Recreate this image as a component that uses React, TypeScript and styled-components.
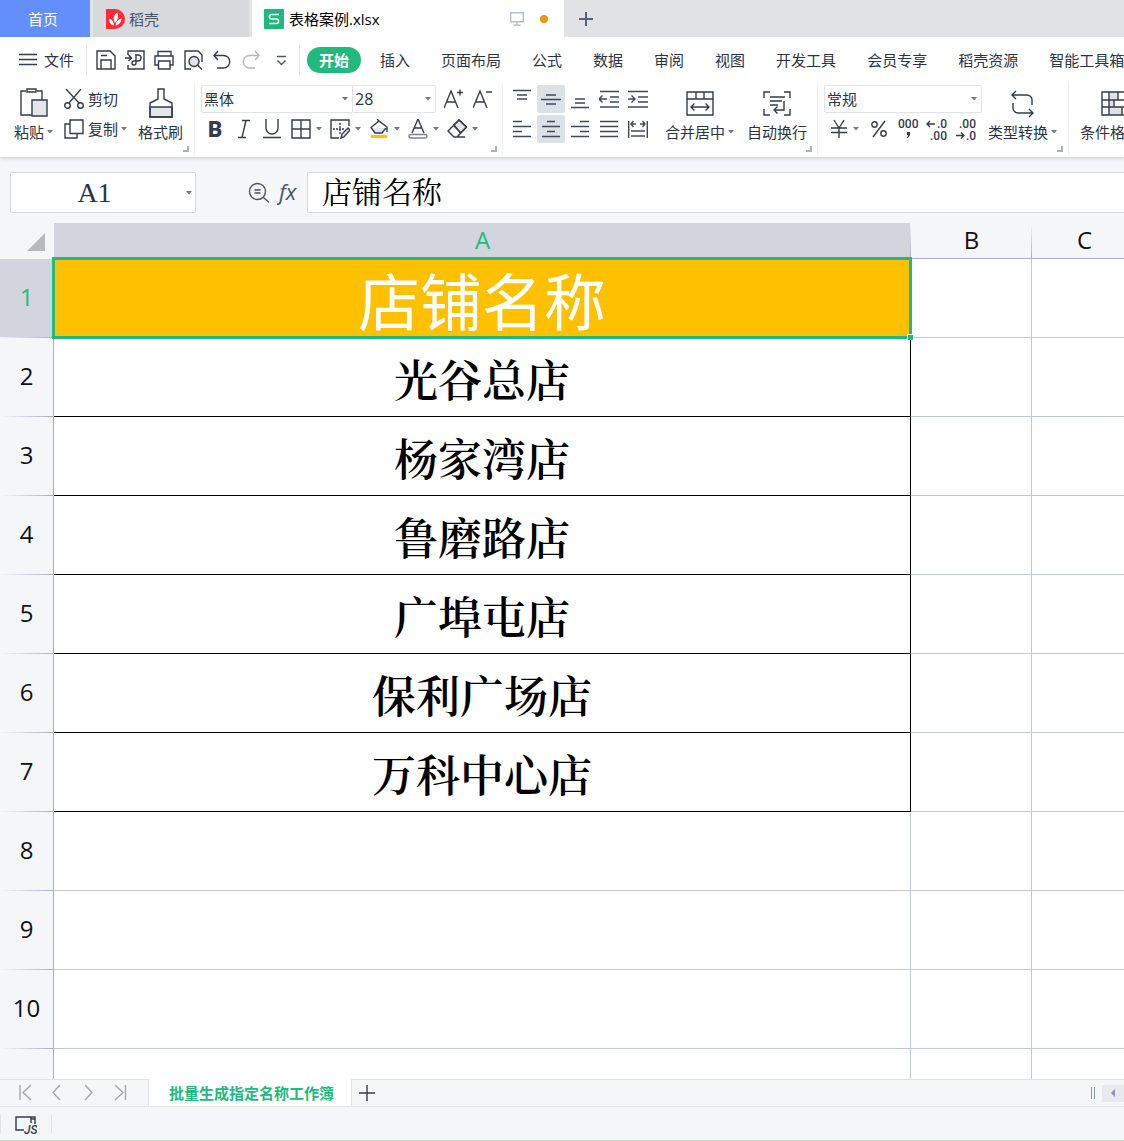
import React from "react";
import styled, { createGlobalStyle } from "styled-components";

const ui = `"Open Sans", "Noto Sans CJK SC", sans-serif`;
const song = `"Noto Serif CJK SC", "Noto Sans CJK SC", serif`;
const ink = "#2b3445";
const green = "#21ba7c";
const line = "#e1e3e8";
const panel = "#f5f6f8";
const gridLine = "#c3c8d9";

const Global = createGlobalStyle`
  *, *::before, *::after { box-sizing: border-box; }
  body { margin: 0; font: 15px/20px ${ui}; color: ${ink}; background: ${panel}; }
  button, input, select { font: inherit; color: inherit; margin: 0; padding: 0; border: 0; background: none; outline: none; border-radius: 0; }
  svg { display: block; flex: none; }
`;

const App_ = styled.div`
  display: flex;
  flex-direction: column;
  height: 100vh;
  overflow: hidden;
  border-bottom: 1px solid #bfe3b4;
`;

/* ---------- window tabs ---------- */
const TabBar = styled.header`
  display: flex;
  flex: none;
  height: 37px;
  background: #e1e2e6;
`;
const HomeTab = styled.button`
  width: 90px;
  padding-right: 4px;
  margin-right: 3px;
  background: #628ffc;
  color: #fff;
`;
const FileTab = styled.button<{ $active?: boolean }>`
  display: flex;
  align-items: center;
  gap: ${(p) => (p.$active ? 5 : 3)}px;
  width: ${(p) => (p.$active ? 312 : 156)}px;
  padding: 1px 16px 0 ${(p) => (p.$active ? 12 : 13)}px;
  margin-right: ${(p) => (p.$active ? 0 : 3)}px;
  background: ${(p) => (p.$active ? "#fff" : "#d8d9dd")};
  color: ${(p) => (p.$active ? "#000" : "#4a5266")};
`;
const TabState = styled.span`
  display: flex;
  align-items: center;
  gap: 16px;
  margin-left: auto;
`;
const Dot = styled.i`
  width: 8px;
  height: 8px;
  border-radius: 50%;
  background: #e99a05;
`;
const NewTab = styled.button`
  display: grid;
  place-items: center;
  width: 43px;
`;

/* ---------- menu ---------- */
const Menu = styled.nav`
  display: flex;
  flex: none;
  align-items: center;
  height: 46px;
  background: #fff;
  white-space: nowrap;
  overflow: hidden;
`;
const FileMenu = styled.button`
  display: flex;
  align-items: center;
  gap: 7px;
  padding: 0 12px 0 19px;
`;
const Quick = styled.div`
  display: flex;
  gap: 7px;
  padding: 0 8px;
  border: solid ${line};
  border-width: 0 1px;
  height: 30px;
  align-items: center;
`;
const MenuTabs = styled.div`
  display: flex;
  gap: 31px;
  padding-left: 7px;
`;
const MenuTab = styled.button<{ $active?: boolean }>`
  flex: none;
  height: 26px;
  ${(p) => p.$active && `width: 54px; margin-right: -12px; border-radius: 13px; background: ${green}; color: #fff; font-weight: 700;`}
`;

/* ---------- ribbon ---------- */
const Ribbon = styled.section`
  position: relative;
  display: flex;
  flex: none;
  height: 74px;
  background: #fff;
  box-shadow: 0 1px 4px rgba(60, 65, 80, 0.25);
  clip-path: inset(0 0 -6px);
  overflow: hidden;
  white-space: nowrap;
  z-index: 1;
`;
const Group = styled.div<{ $w: number; $gap?: number; $pad?: number }>`
  position: relative;
  display: flex;
  flex: none;
  width: ${(p) => p.$w}px;
  gap: ${(p) => p.$gap ?? 0}px;
  padding-left: ${(p) => p.$pad ?? 6}px;
  height: 72px;
  border-right: 1px solid #eceef1;
`;
const Launcher = styled.button`
  position: absolute;
  right: 5px;
  bottom: 3px;
  width: 6px;
  height: 6px;
  border: solid #a9b2c6;
  border-width: 0 2px 2px 0;
`;
const Big = styled.button`
  display: flex;
  flex: none;
  flex-direction: column;
  align-items: center;
  justify-content: space-between;
  height: 59px;
  padding-top: 4px;
`;
const Label = styled.span`
  display: flex;
  align-items: center;
  gap: 3px;
`;
const Stack = styled.div`
  display: flex;
  flex: none;
  flex-direction: column;
  gap: 2px;
  padding-top: 2px;
`;
const Row = styled.div<{ $gap?: number }>`
  display: flex;
  align-items: center;
  height: 28px;
  gap: ${(p) => p.$gap ?? 0}px;
`;
const Small = styled.button`
  display: flex;
  align-items: center;
  gap: 4px;
  height: 28px;
`;
const Tool = styled.button<{ $w?: number; $on?: boolean }>`
  display: flex;
  flex: none;
  align-items: center;
  justify-content: center;
  gap: 5px;
  width: ${(p) => p.$w ?? 28}px;
  height: 28px;
  border-radius: 2px;
  background: ${(p) => (p.$on ? "#dce1e6" : "none")};
`;
const Combo = styled.label<{ $w: number }>`
  display: flex;
  align-items: center;
  width: ${(p) => p.$w}px;
  height: 28px;
  padding: 0 4px 0 2px;
  border: 1px solid ${line};
  border-radius: 2px;
  & + & { margin-left: -1px; font-size: 16px; }
  select { appearance: none; flex: 1; min-width: 0; }
`;

/* ---------- formula bar ---------- */
const FormulaBar = styled.section`
  display: flex;
  flex: none;
  height: 66px;
  padding: 15px 0 10px 10px;
  background: ${panel};
`;
const NameBox = styled.label`
  display: flex;
  align-items: center;
  width: 186px;
  padding-right: 3px;
  border: 1px solid #d5d7dd;
  border-radius: 2px;
  background: #fff;
  input { flex: 1; min-width: 0; padding: 0 8px 0 0; text-align: center; font: 28px/30px "Liberation Serif", serif; }
`;
const FormulaTools = styled.div`
  display: flex;
  align-items: center;
  justify-content: flex-end;
  gap: 7px;
  width: 111px;
  padding-right: 6px;
`;
const FormulaInput = styled.input`
  flex: 1;
  min-width: 0;
  padding: 0 14px 6px;
  border: 1px solid #d5d7dd;
  border-right: 0;
  border-radius: 2px 0 0 2px;
  background: #fff;
  color: #000;
  font: 400 30px/30px ${song};
`;

/* ---------- sheet ---------- */
const SheetArea = styled.main`
  flex: 1;
  min-height: 0;
  overflow: hidden;
  background: #fff;
`;
const Sheet = styled.table`
  width: 1137px;
  table-layout: fixed;
  border-collapse: separate;
  border-spacing: 0;
`;
const Corner = styled.td`
  padding: 0 9px 8px 0;
  vertical-align: bottom;
  background: ${panel};
  svg { margin-left: auto; }
`;
const ColHead = styled.th<{ $on?: boolean }>`
  height: 36px;
  padding: 0 0 2px;
  border-bottom: 1px solid #a9afc3;
  background: linear-gradient(to bottom, ${panel}, #a9b0c6) right / 1px 100% no-repeat, ${(p) => (p.$on ? "#d2d5dd" : panel)};
  color: ${(p) => (p.$on ? green : "#111")};
  font: 24px/32px ${ui};
`;
const RowHead = styled.th<{ $on?: boolean }>`
  height: 79px;
  padding: 0 0 4px;
  border-right: 1px solid #a9b0c6;
  background: linear-gradient(to right, ${panel}, #a9b0c6) bottom / 100% 1px no-repeat, ${(p) => (p.$on ? "#d2d5dd" : panel)};
  color: ${(p) => (p.$on ? green : "#111")};
  font: 24px/32px ${ui};
`;
const Cell = styled.td<{ $kind?: "title" | "data" }>`
  position: ${(p) => (p.$kind === "title" ? "relative" : "static")};
  padding: ${(p) => (p.$kind ? "2px 0 0" : "0")};
  border: solid ${(p) => (p.$kind ? "#000" : gridLine)};
  border-width: 0 1px 1px 0;
  background: ${(p) => (p.$kind === "title" ? "#ffc000" : "#fff")};
  color: ${(p) => (p.$kind === "title" ? "#fff" : "#000")};
  text-align: center;
  font: ${(p) => (p.$kind === "title" ? `400 62px/64px "Noto Sans CJK SC", sans-serif` : `600 44px/64px ${song}`)};
`;
const Selection = styled.div`
  position: absolute;
  z-index: 1;
  inset: -2px;
  border: 3px solid ${green};
  &::after {
    content: "";
    position: absolute;
    right: -4px;
    bottom: -4px;
    width: 6px;
    height: 6px;
    border: solid #fff;
    border-width: 1px 0 0 1px;
    background: ${green};
  }
`;

/* ---------- footer ---------- */
const SheetBar = styled.footer`
  display: flex;
  flex: none;
  height: 28px;
  border: solid ${line};
  border-width: 1px 0;
  background: ${panel};
`;
const SheetNav = styled.div`
  display: flex;
  align-items: center;
  gap: 15px;
  width: 149px;
  padding: 0 0 2px 18px;
  border-right: 1px solid ${line};
`;
const SheetTab = styled.button`
  padding: 0 17px 0 20px;
  margin-top: -1px;
  background: #fff;
  border-right: 1px solid ${line};
  color: ${green};
  font-weight: 700;
`;
const AddSheet = styled.button`
  display: grid;
  place-items: center;
  width: 29px;
`;
const Scroll = styled.div`
  display: flex;
  align-items: center;
  gap: 7px;
  margin-left: auto;
`;
const Splitter = styled.i`
  width: 4px;
  height: 12px;
  border: solid #8c97b0;
  border-width: 0 1px;
`;
const ScrollLeft = styled.button`
  display: grid;
  place-items: center;
  width: 22px;
  height: 17px;
  background: #e8e9ef;
`;
const Status = styled.div`
  display: flex;
  flex: none;
  align-items: center;
  height: 33px;
  background: ${panel};
`;
const StatusItem = styled.button`
  display: grid;
  place-items: center;
  width: 52px;
  height: 18px;
  border: solid ${line};
  border-width: 0 1px;
`;

/* ---------- icons ---------- */
type IconProps = { w?: number; h?: number; color?: string; sw?: number; children: React.ReactNode };
const Icon = ({ w = 22, h = 22, color = "#333c4d", sw = 1.4, children }: IconProps) => (
  <svg width={w} height={h} viewBox={`0 0 ${w} ${h}`} fill="none" stroke={color} strokeWidth={sw} aria-hidden="true">
    {children}
  </svg>
);
const Arrow = () => (
  <svg width="6" height="4" viewBox="0 0 6 4" aria-hidden="true"><path d="M0 0h6L3 3.5z" fill="#6d7891" /></svg>
);
const Glyph = ({ x, y, size, weight, italic, children }: { x: number; y: number; size: number; weight?: number; italic?: boolean; children: string }) => (
  <text x={x} y={y} fontSize={size} fontWeight={weight} fontStyle={italic ? "italic" : undefined} fontFamily="Roboto, sans-serif" fill="#333c4d" stroke="none">{children}</text>
);
const Lines = ({ d }: { d: string }) => <Icon w={20} h={20} color="#3f495b"><path d={d} /></Icon>;

const quick: [string, React.ReactNode][] = [
  ["保存", <Icon><path d="M2 2h13l5 5v13H2zM6 20v-9h10v9M6 6.500h6" /></Icon>],
  ["输出为PDF", <Icon><path d="M4 6V2h16v18H4v-4M1 9h6M4.500 6 7.500 9l-3 3M11 6h3a3 3 0 0 1 0 6h-3M12 6v8a2 2 0 1 1-2-2h2" /></Icon>],
  ["打印", <Icon><path d="M5 7V2.500h13V7M5 16H2V7h18v9h-3M5.500 12h11.500v8H5.500z" /></Icon>],
  ["打印预览", <Icon><path d="M9 20H3V2h13l4 4v7" /><circle cx="12" cy="12.500" r="5" fill="#dfe1e5" /><path d="m15.500 16 4.500 4.500" /></Icon>],
  ["撤销", <Icon><path d="M7 2 3 6.500 7 11M3 6.500h9.500a6.200 6.200 0 0 1 0 12.500H6" /></Icon>],
  ["恢复", <Icon color="#b7babf"><path d="m15 2 4 4.500L15 11M19 6.500H9.500a6.200 6.200 0 0 0 0 12.500H15" /></Icon>],
  ["更多", <Icon color="#4d566b"><path d="M8 7.500h9M8.500 11.500l4 4 4-4" /></Icon>],
];
const menus = ["插入", "页面布局", "公式", "数据", "审阅", "视图", "开发工具", "会员专享", "稻壳资源", "智能工具箱"];

const alignTop: [string, string][] = [
  ["顶端对齐", "M1 1.500h18M5 6h10M5 10h10"],
  ["垂直居中", "M5 6h10M0 10.500h20M5 15h10"],
  ["底端对齐", "M5 10h10M5 14h10M1 18.500h18"],
  ["减少缩进量", "M1 2.500h19M11 8h9M11 13h9M1 18h19M0 10h8M3.500 6.500 0 10l3.500 3.500"],
  ["增加缩进量", "M0 2.500h20M10 8h10M10 13h10M0 18h20M0 10h7M3.500 6.500 7 10l-3.500 3.500"],
];
const alignBottom: [string, string][] = [
  ["左对齐", "M1 2.500h9M1 7.500h18M1 12.500h9M1 17.500h18"],
  ["居中", "M6 2.500h8M1 7.500h18M6 12.500h8M1 17.500h18"],
  ["右对齐", "M10 2.500h9M1 7.500h18M10 12.500h9M1 17.500h18"],
  ["两端对齐", "M1 2.500h18M1 7.500h18M1 12.500h18M1 17.500h18"],
  ["分散对齐", "M.7 2v17M19.300 2v17M3 12h14M3 17h14M3 5h5M12 5h5M5.500 2 3 5l2.500 3M14.500 2 17 5l-2.500 3"],
];

const shops = ["光谷总店", "杨家湾店", "鲁磨路店", "广埠屯店", "保利广场店", "万科中心店"];

export default function App() {
  return (
    <App_>
      <Global />
      <TabBar>
        <HomeTab>首页</HomeTab>
        <FileTab>
          <svg width="20" height="20" viewBox="0 0 20 20" aria-hidden="true">
            <path d="M0 0h9a10 10 0 0 1 0 20H0z" fill="#fa2c3a" />
            <path d="M8 16.500C4 15.500 2.800 12.500 3.500 9.500 6.500 11 7.800 13 8 16.500zM9 14C6.500 9.500 8 5.500 11.500 3.500c1.300 4 .5 7.500-2.500 10.500zM9.500 16.500c.5-4 2.500-6 6-7-.2 4-2.500 6.500-6 7z" fill="#fff" />
          </svg>
          稻壳
        </FileTab>
        <FileTab $active>
          <svg width="20" height="20" viewBox="0 0 20 20" aria-hidden="true">
            <rect width="20" height="20" rx="1" fill="#1eba7b" />
            <path d="M15 5.500H7.500a2 2 0 0 0-2 2v.5a2 2 0 0 0 2 2h5a2 2 0 0 1 2 2v.5a2 2 0 0 1-2 2H5" fill="none" stroke="#fff" strokeWidth="1.600" />
          </svg>
          表格案例.xlsx
          <TabState>
            <Icon w={14} h={14} color="#b9bfd3"><path d="M.7.7h12.600v9H.7zM7 10v3M3.500 13.300h7" /></Icon>
            <Dot />
          </TabState>
        </FileTab>
        <NewTab aria-label="新建"><Icon w={14} h={14} color="#56617c" sw={2}><path d="M7 0v14M0 7h14" /></Icon></NewTab>
      </TabBar>

      <Menu>
        <FileMenu>
          <Icon w={18} h={14}><path d="M0 1.500h18M0 6.500h18M0 11.500h18" /></Icon>
          文件
        </FileMenu>
        <Quick>
          {quick.map(([name, icon]) => <button key={name} aria-label={name}>{icon}</button>)}
        </Quick>
        <MenuTabs>
          <MenuTab $active>开始</MenuTab>
          {menus.map((m) => <MenuTab key={m}>{m}</MenuTab>)}
        </MenuTabs>
      </Menu>

      <Ribbon>
        <Group $w={195} $gap={11} $pad={14}>
          <Big>
            <Icon w={28} h={32}><path d="M6 4H1v24h11M17 4h5v9M7 2h9v3H7z" /><path d="M12 13h15v16H12z" fill="#e4e6e8" /></Icon>
            <Label>粘贴<Arrow /></Label>
          </Big>
          <Stack>
            <Small>
              <Icon w={20} h={20}><path d="M2 0l13 14M17 0 5 14" /><circle cx="3.500" cy="16.500" r="2.800" /><circle cx="16.500" cy="16.500" r="2.800" /></Icon>
              剪切
            </Small>
            <Small>
              <Icon w={20} h={20}><path d="M6 5H1v14h12v-4M6 1h13v13.500H6z" /></Icon>
              <Label>复制<Arrow /></Label>
            </Small>
          </Stack>
          <Big>
            <Icon w={24} h={32}><path d="M1 20h22v10H1z" fill="#e4e6e8" /><path d="M9 2h6v10l8 4v14H1V16l8-4z" /></Icon>
            格式刷
          </Big>
          <Launcher aria-label="剪贴板设置" />
        </Group>

        <Group $w={308}>
          <Stack>
            <Row>
              <Combo $w={152}><select aria-label="字体"><option>黑体</option></select><Arrow /></Combo>
              <Combo $w={84}><select aria-label="字号"><option>28</option></select><Arrow /></Combo>
              <Tool $w={36} aria-label="增大字号"><Icon w={20} h={20}><path d="M0 19 7 2l7 17M3 13h8M13 3.500h6M16 .5v6" /></Icon></Tool>
              <Tool $w={22} aria-label="减小字号"><Icon w={20} h={20}><path d="M0 19 7 2l7 17M3 13h8M13 3h6" /></Icon></Tool>
            </Row>
            <Row>
              <Tool $w={29} aria-label="加粗"><Icon w={20} h={26}><Glyph x={2} y={21} size={22} weight={900}>B</Glyph></Icon></Tool>
              <Tool aria-label="倾斜"><Icon w={12} h={20}><path d="M4 1.500h8M0 18.500h8M8 1.500 4 18.500" /></Icon></Tool>
              <Tool aria-label="下划线"><Icon w={18} h={20}><path d="M3 0v9a6 6 0 0 0 12 0V0M0 18.500h18" /></Icon></Tool>
              <Tool $w={40} aria-label="边框"><Icon w={20} h={20}><path d="M1 1h18v18H1zM10 1v18M1 10h18" /></Icon><Arrow /></Tool>
              <Tool $w={39} aria-label="绘图边框"><Icon w={20} h={20}><path d="M19 7V1H1v18h8" /><path d="M3 10h11M10 4v11" strokeDasharray="2 1" /><path d="m11 19 1-4 6-6 2 2-6 7z" fill="#e4e6e8" /></Icon><Arrow /></Tool>
              <Tool $w={39} aria-label="填充颜色"><Icon w={20} h={20}><path d="M4 9h13l-5 5H6z" fill="#e4e6e8" stroke="none" /><path d="M18 13V8l-8-6-8 6.500L6 14h7l4-5M8 0l3 3" /><path d="M3 17.500h14" stroke="#ffc000" strokeWidth="3" strokeLinecap="round" /></Icon><Arrow /></Tool>
              <Tool $w={39} aria-label="字体颜色"><Icon w={20} h={20}><path d="m4 14 6-14 6 14M6 9h8" /><rect x="1" y="15.500" width="18" height="3.500" rx="1.700" stroke="#7b828e" /></Icon><Arrow /></Tool>
              <Tool $w={39} aria-label="清除"><Icon w={20} h={20}><path d="m7 6 5-5 7.500 7-6 6z" fill="#e4e6e8" /><path d="M12 1 1 12l6 6h3L19.500 8zM6.500 6.500l7 7M9 18h9" /></Icon><Arrow /></Tool>
            </Row>
          </Stack>
          <Launcher aria-label="字体设置" />
        </Group>

        <Group $w={315} $pad={5} $gap={13}>
          <Stack>
            <Row $gap={1}>{alignTop.map(([n, d], i) => <Tool key={n} aria-label={n} $on={i === 1}><Lines d={d} /></Tool>)}</Row>
            <Row $gap={1}>{alignBottom.map(([n, d], i) => <Tool key={n} aria-label={n} $on={i === 1}><Lines d={d} /></Tool>)}</Row>
          </Stack>
          <Big>
            <Icon w={28} h={32}><path d="M1 5h26v23H1zM1 12h26M10 5v7M18 5v7M5 20h18M8.500 16.500 5 20l3.500 3.500M19.500 16.500 23 20l-3.500 3.500" /></Icon>
            <Label>合并居中<Arrow /></Label>
          </Big>
          <Big>
            <Icon w={28} h={32}><path d="M1 11V5h6M21 5h6v6M27 22v6h-6M7 28H1v-6M7 10h15M7 14h12M7 18h8M21 14v9H12M14.500 19.500 11 23l3.500 3.500" /></Icon>
            自动换行
          </Big>
          <Launcher aria-label="对齐设置" />
        </Group>

        <Group $w={251} $gap={6}>
          <Stack>
            <Row><Combo $w={158}><select aria-label="数字格式"><option>常规</option></select><Arrow /></Combo></Row>
            <Row>
              <Tool $w={41} aria-label="货币"><Icon w={18} h={20}><path d="m4 1 5 8 5-8M1 9h16M1 13.500h16M9 9v10" /></Icon><Arrow /></Tool>
              <Tool aria-label="百分比"><Icon w={16} h={20}><circle cx="3.500" cy="5.500" r="2.700" /><circle cx="12.500" cy="14.500" r="2.700" /><path d="M14 2 2 18" /></Icon></Tool>
              <Tool $w={29} aria-label="千位分隔"><Icon w={22} h={28}><Glyph x={1} y={13} size={12} weight={500}>000</Glyph><path d="M10 17h3v3l-2 3h-1l1-3h-1z" fill="#333c4d" stroke="none" /></Icon></Tool>
              <Tool $w={29} aria-label="增加小数位数"><Icon w={22} h={28}><path d="M1 9h8M4 6 1 9l3 3" /><Glyph x={11} y={13} size={12} weight={500}>.0</Glyph><Glyph x={4} y={25} size={12} weight={500}>.00</Glyph></Icon></Tool>
              <Tool $w={29} aria-label="减少小数位数"><Icon w={22} h={28}><path d="M1 20.500h8M6 17.500l3 3-3 3" /><Glyph x={4} y={13} size={12} weight={500}>.00</Glyph><Glyph x={11} y={25} size={12} weight={500}>.0</Glyph></Icon></Tool>
            </Row>
          </Stack>
          <Big>
            <Icon w={26} h={32}><path d="M6 4 2 8l4 4M2 8h15a5 5 0 0 1 5 5v5M3 16v5a5 5 0 0 0 5 5h15M19 22l4 4-4 4" /></Icon>
            <Label>类型转换<Arrow /></Label>
          </Big>
          <Launcher aria-label="数字设置" />
        </Group>

        <Group $w={90} $pad={11}>
          <Big>
            <Icon w={28} h={32}><path d="M8 5h9v8H8zM8 13h5v7H8zM8 20h13v8H8z" fill="#dfe1e5" stroke="none" /><path d="M1 5h26v23H1zM1 13h26M1 20h26M8 5v23M17 5v8M13 13v7M21 20v8" /></Icon>
            <Label>条件格式<Arrow /></Label>
          </Big>
        </Group>
      </Ribbon>

      <FormulaBar>
        <NameBox><input aria-label="名称框" defaultValue="A1" /><Arrow /></NameBox>
        <FormulaTools>
          <Icon w={22} h={22} color="#4a5468"><circle cx="9.500" cy="9.500" r="8" /><path d="m15.500 15.500 5.500 5M6.500 8h6M6.500 11h6" /></Icon>
          <Icon w={24} h={32} color="#4a5468"><text x="2" y="23" fontSize="22" fontStyle="italic" fontFamily="Open Sans, sans-serif" fill="#4a5468" stroke="none">fx</text></Icon>
        </FormulaTools>
        <FormulaInput aria-label="编辑栏" defaultValue="店铺名称" />
      </FormulaBar>

      <SheetArea>
        <Sheet>
          <colgroup>
            <col style={{ width: 54 }} /><col style={{ width: 857 }} /><col style={{ width: 121 }} /><col style={{ width: 105 }} />
          </colgroup>
          <thead>
            <tr>
              <Corner><svg width="18" height="18" viewBox="0 0 18 18" aria-hidden="true"><path d="M18 0v18H0z" fill="#b9b9b9" /></svg></Corner>
              <ColHead $on>A</ColHead><ColHead>B</ColHead><ColHead>C</ColHead>
            </tr>
          </thead>
          <tbody>
            <tr>
              <RowHead $on>1</RowHead>
              <Cell $kind="title">店铺名称<Selection /></Cell>
              <Cell /><Cell />
            </tr>
            {shops.map((s, i) => (
              <tr key={s}><RowHead>{i + 2}</RowHead><Cell $kind="data">{s}</Cell><Cell /><Cell /></tr>
            ))}
            {[8, 9, 10].map((n) => (
              <tr key={n}><RowHead>{n}</RowHead><Cell /><Cell /><Cell /></tr>
            ))}
            <tr><RowHead /><Cell /><Cell /><Cell /></tr>
          </tbody>
        </Sheet>
      </SheetArea>

      <SheetBar>
        <SheetNav>
          {([["首张", "M2 3v15M13 3 5 10.500 13 18"], ["上一张", "M11 3 4 10.500 11 18"], ["下一张", "M5 3l7 7.500L5 18"], ["末张", "M4 3l8 7.500L4 18M14.500 3v15"]] as const).map(([n, d]) => (
            <button key={n} aria-label={n}><Icon w={16} h={20} color="#a3a6ad"><path d={d} /></Icon></button>
          ))}
        </SheetNav>
        <SheetTab>批量生成指定名称工作簿</SheetTab>
        <AddSheet aria-label="新建工作表"><Icon w={16} h={16}><path d="M8 0v16M0 8h16" /></Icon></AddSheet>
        <Scroll>
          <Splitter />
          <ScrollLeft aria-label="向左滚动"><svg width="4" height="8" viewBox="0 0 4 8" aria-hidden="true"><path d="M4 0v8L0 4z" fill="#8592b0" /></svg></ScrollLeft>
        </Scroll>
      </SheetBar>
      <Status>
        <StatusItem aria-label="JS 宏">
          <Icon w={22} h={22}><path d="M9 15H1V2h19v7M16 2v6M16 4h4" /><Glyph x={9} y={19} size={12} weight={500} italic>JS</Glyph></Icon>
        </StatusItem>
      </Status>
    </App_>
  );
}
